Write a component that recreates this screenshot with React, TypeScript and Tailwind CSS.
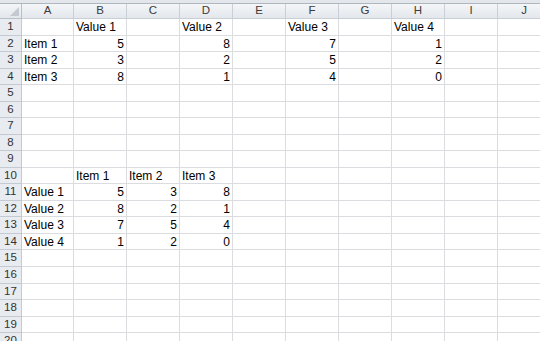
import React from "react";

const cols = ["A", "B", "C", "D", "E", "F", "G", "H", "I", "J"];

// row heights alternate a bit, like the scaled screenshot
const heights = [17, 16, 17, 16, 17, 16, 17, 16, 17, 16, 17, 16, 17, 16, 17, 17, 16, 17, 16, 16];

type Cell = string | number | undefined;

const data: Record<number, Cell[]> = {
  1: [undefined, "Value 1", undefined, "Value 2", undefined, "Value 3", undefined, "Value 4"],
  2: ["Item 1", 5, undefined, 8, undefined, 7, undefined, 1],
  3: ["Item 2", 3, undefined, 2, undefined, 5, undefined, 2],
  4: ["Item 3", 8, undefined, 1, undefined, 4, undefined, 0],
  10: [undefined, "Item 1", "Item 2", "Item 3"],
  11: ["Value 1", 5, 3, 8],
  12: ["Value 2", 8, 2, 1],
  13: ["Value 3", 7, 5, 4],
  14: ["Value 4", 1, 2, 0],
};

const App = () => {
  return (
    <div className="w-[540px] h-[341px] overflow-hidden bg-white text-[12px] leading-none text-black font-['Liberation_Sans',Arial,sans-serif]">
      <div className="h-[3px] bg-[#e3e6ea]" />
      <div className="grid grid-cols-[22px_52px_repeat(9,53px)] border-t border-[#aeb6c0] w-max">
        {/* header row */}
        <div className="h-[15px] relative bg-gradient-to-b from-[#f4f6f8] to-[#e3e7ec] border-r border-b border-[#b7bfc8]">
          <svg className="absolute right-[2px] bottom-[2px]" width="9" height="9" viewBox="0 0 9 9">
            <polygon points="9,0 9,9 0,9" fill="#c3c9d0" />
          </svg>
        </div>
        {cols.map((c) => (
          <div
            key={c}
            className="h-[15px] flex items-center justify-center bg-gradient-to-b from-[#f4f6f8] to-[#e3e7ec] border-r border-b border-[#c9cfd6] text-[#3b3b3b] text-[11.5px]"
          >
            {c}
          </div>
        ))}

        {heights.map((h, i) => {
          const r = i + 1;
          const row = data[r] || [];
          return (
            <React.Fragment key={r}>
              <div
                style={{ height: h }}
                className="flex items-center justify-center bg-[#e8ebef] border-r border-b border-[#c3cad2] text-[#333] text-[11.5px]"
              >
                {r}
              </div>
              {cols.map((c, j) => {
                const v = row[j];
                const isNum = typeof v === "number";
                return (
                  <div
                    key={c}
                    style={{ height: h }}
                    className={`flex items-center border-r border-b border-[#dadcdf] px-[2px] whitespace-nowrap ${
                      isNum ? "justify-end" : "justify-start"
                    }`}
                  >
                    {v}
                  </div>
                );
              })}
            </React.Fragment>
          );
        })}
      </div>
    </div>
  );
};

export default App;
